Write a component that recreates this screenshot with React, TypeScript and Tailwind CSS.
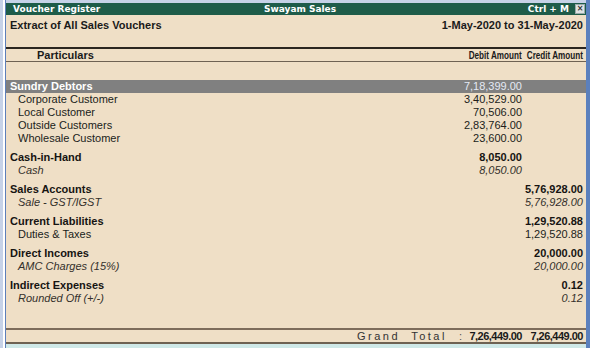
import React from "react";

type Row = { label: string; kind: "group" | "item" | "italic" | "hl"; debit?: string; credit?: string };

const GROUPS: Row[][] = [
  [
    { label: "Sundry Debtors", kind: "hl", debit: "7,18,399.00" },
    { label: "Corporate Customer", kind: "item", debit: "3,40,529.00" },
    { label: "Local Customer", kind: "item", debit: "70,506.00" },
    { label: "Outside Customers", kind: "item", debit: "2,83,764.00" },
    { label: "Wholesale Customer", kind: "item", debit: "23,600.00" },
  ],
  [
    { label: "Cash-in-Hand", kind: "group", debit: "8,050.00" },
    { label: "Cash", kind: "italic", debit: "8,050.00" },
  ],
  [
    { label: "Sales Accounts", kind: "group", credit: "5,76,928.00" },
    { label: "Sale - GST/IGST", kind: "italic", credit: "5,76,928.00" },
  ],
  [
    { label: "Current Liabilities", kind: "group", credit: "1,29,520.88" },
    { label: "Duties & Taxes", kind: "item", credit: "1,29,520.88" },
  ],
  [
    { label: "Direct Incomes", kind: "group", credit: "20,000.00" },
    { label: "AMC Charges (15%)", kind: "italic", credit: "20,000.00" },
  ],
  [
    { label: "Indirect Expenses", kind: "group", credit: "0.12" },
    { label: "Rounded Off (+/-)", kind: "italic", credit: "0.12" },
  ],
];

function LedgerRow({ r }: { r: Row }) {
  const base = "flex h-[13px] items-center text-[11px] leading-[13px] whitespace-nowrap";
  if (r.kind === "hl") {
    return (
      <div className={`${base} bg-[#808080] font-bold text-white`}>
        <span className="flex-1 pl-[4px]">{r.label}</span>
        <span className="w-[70px] text-right font-normal text-[#e4e9f4]">{r.debit}</span>
        <span className="w-[64px]" />
      </div>
    );
  }
  const tone =
    r.kind === "group"
      ? "font-bold text-[#161412]"
      : r.kind === "italic"
        ? "italic text-[#34302b]"
        : "text-[#201d1a]";
  return (
    <div className={`${base} ${tone}`}>
      <span className={`flex-1 ${r.kind === "group" ? "pl-[4px]" : "pl-[12px]"}`}>{r.label}</span>
      <span className="w-[70px] text-right">{r.debit ?? ""}</span>
      <span className="w-[64px] pr-[3px] text-right">{r.credit ?? ""}</span>
    </div>
  );
}

export default function App() {
  return (
    <div className="flex h-[348px] w-[590px] overflow-hidden bg-[#c6d2e7] font-['Liberation_Sans',Arial,sans-serif]">
      <div className="w-[3px] bg-[#c6d2e7]" />
      <div className="w-[2px] bg-white" />
      <div className="w-px bg-[#5d7fb9]" />
      <div className="flex flex-1 flex-col pt-[3px]">
        <div className="grid h-[12px] grid-cols-[1fr_auto_1fr] items-center whitespace-nowrap bg-[#1e5c49] font-['DejaVu_Sans',sans-serif] text-[9px] font-bold leading-[12px] text-white">
          <span className="pl-[7px]">Voucher Register</span>
          <span className="pl-[8px]">Swayam Sales</span>
          <span className="flex items-center justify-end">
            <span className="mr-[6px]">Ctrl + M</span>
            <span className="mr-px flex h-[10px] w-[10px] items-center justify-center border border-[#9aa] bg-[#dfe3e3] text-[8px] leading-none text-[#333]">
              ×
            </span>
          </span>
        </div>
        <div className="flex flex-1 flex-col bg-[#efdfc6]">
          <div className="flex h-[32px] items-start justify-between whitespace-nowrap pl-[4px] pr-[3px] pt-[4px] text-[11px] font-bold leading-[13px] text-[#1a1a1a]">
            <span>Extract of All Sales Vouchers</span>
            <span>1-May-2020 to 31-May-2020</span>
          </div>
          <div className="h-[2px] bg-[#2b2620]" />
          <div className="flex h-[12px] items-center whitespace-nowrap text-[11px] font-bold leading-[12px] text-[#1a1a1a]">
            <span className="flex-1 pl-[31px]">Particulars</span>
            <span className="flex w-[80px] justify-end">
              <span className="inline-block origin-right scale-x-[0.74]">Debit Amount</span>
            </span>
            <span className="flex w-[64px] justify-end pr-[3px]">
              <span className="inline-block shrink-0 origin-right scale-x-[0.74]">Credit Amount</span>
            </span>
          </div>
          <div className="h-px bg-[#6e6253]" />
          <div className="flex flex-col gap-[6px] pt-[18px]">
            {GROUPS.map((g, i) => (
              <div key={i} className="flex flex-col">
                {g.map((r) => (
                  <LedgerRow key={r.label} r={r} />
                ))}
              </div>
            ))}
          </div>
          <div className="flex-1" />
          <div className="h-[2px] bg-[#7d6c5b]" />
          <div className="flex h-[12px] items-center whitespace-nowrap text-[11px] leading-[12px] text-[#1a1a1a]">
            <span className="flex-1" />
            <span className="tracking-[2.5px] text-[#333]">Grand&nbsp;&nbsp;Total</span>
            <span className="ml-[12px] mr-[4px] text-[#555]">:</span>
            <span className="w-[56px] text-right font-bold tracking-[-0.5px]">7,26,449.00</span>
            <span className="w-[64px] pr-[3px] text-right font-bold tracking-[-0.5px]">7,26,449.00</span>
          </div>
          <div className="h-[2px] bg-[#6e6253]" />
          <div className="h-[4px] bg-[#cfe9e8]" />
        </div>
      </div>
      <div className="w-[4px] bg-[#5b80bd]" />
    </div>
  );
}
